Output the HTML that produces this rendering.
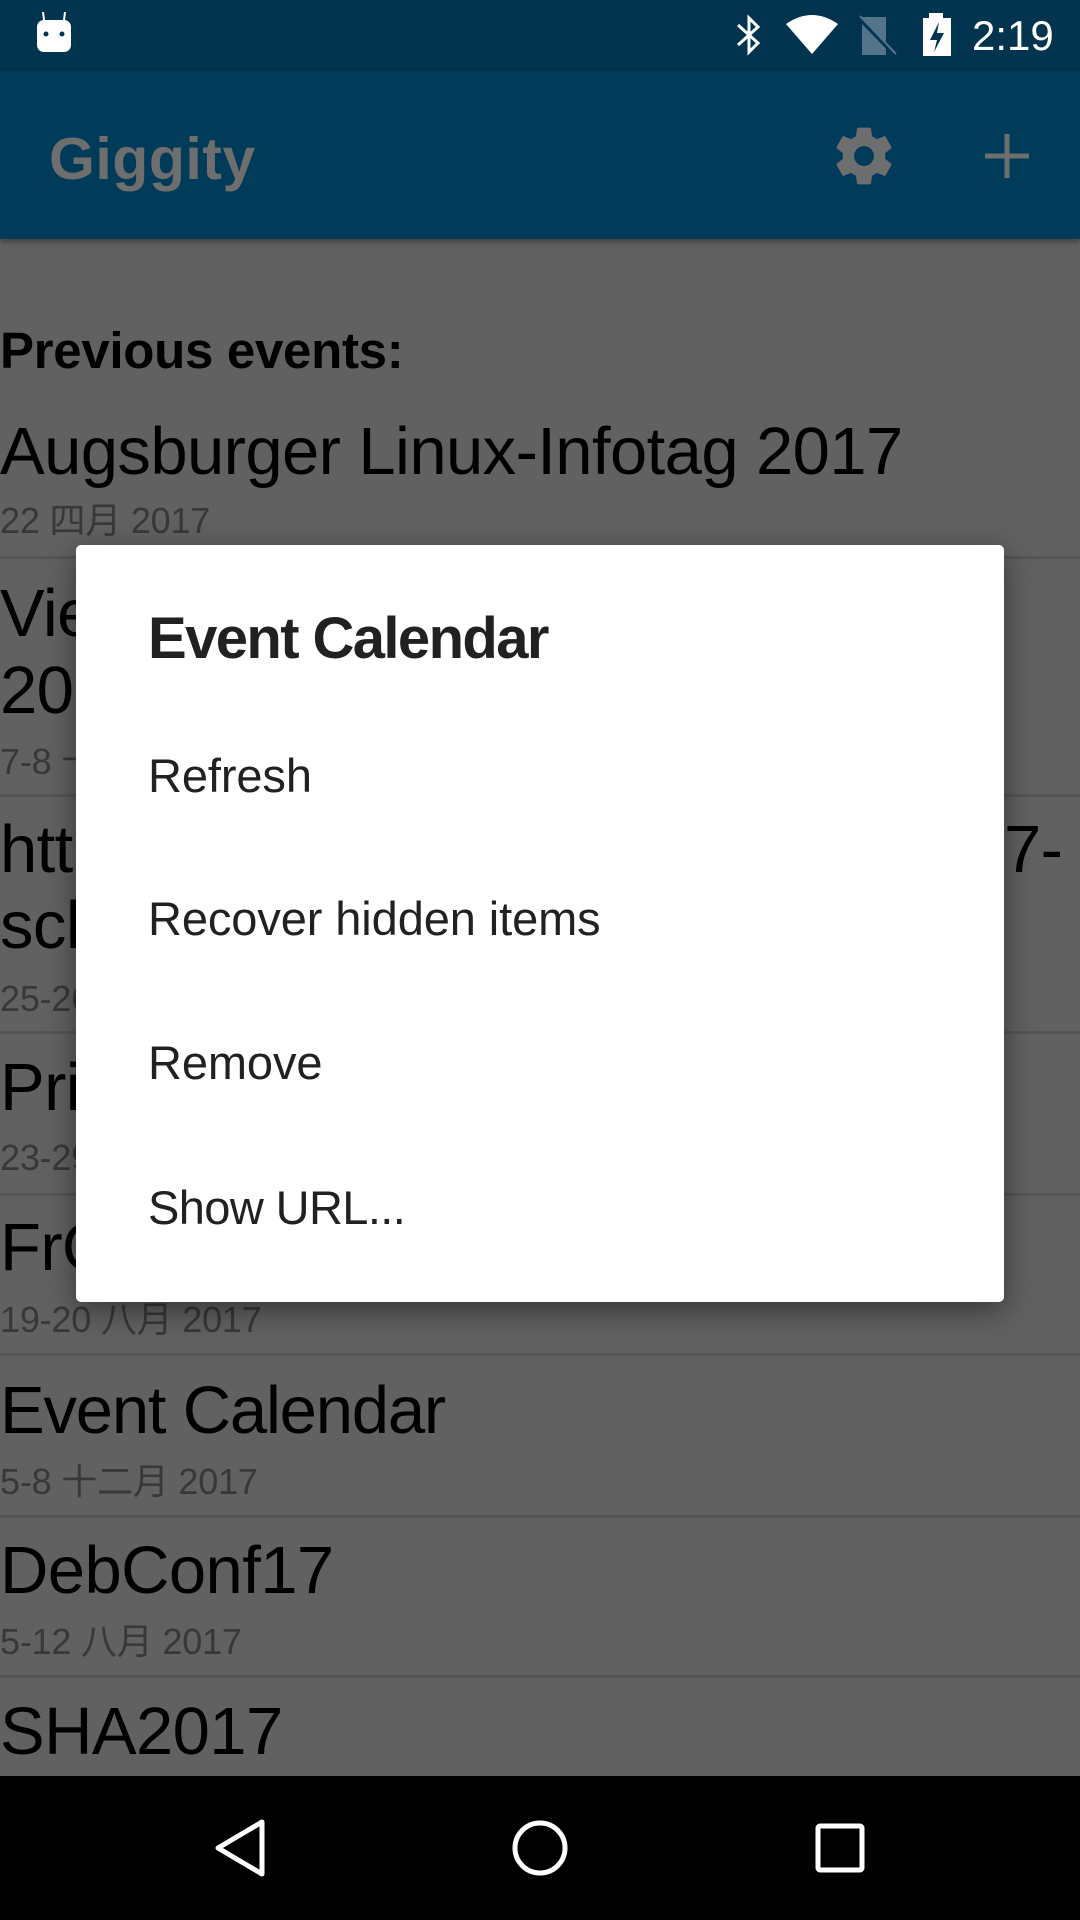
<!DOCTYPE html>
<html><head><meta charset="utf-8"><style>
*{margin:0;padding:0;box-sizing:border-box}
body{width:1080px;height:1920px;position:relative;overflow:hidden;background:#616161;font-family:"Liberation Sans","Noto Sans CJK SC",sans-serif}
.a{position:absolute;white-space:nowrap;line-height:1.15}
.t{font-size:67px;color:#000;letter-spacing:-0.6px;left:0}
.d{font-size:36px;color:#383838;letter-spacing:-0.2px;left:0}
.hr{position:absolute;left:0;width:1080px;height:3px;background:#555}
.m{font-size:47px;color:#212121;left:148px;letter-spacing:-0.1px}
</style></head><body>
<div style="position:absolute;left:0;top:0;width:1080px;height:71px;background:#02344f"></div>
<svg style="position:absolute;left:0;top:0" width="1080" height="71">
<rect x="37" y="20" width="34" height="32" rx="7" fill="#fff"/>
<line x1="44" y1="20" x2="43" y2="12" stroke="#fff" stroke-width="2"/>
<line x1="64" y1="20" x2="65" y2="12" stroke="#fff" stroke-width="2"/>
<circle cx="46" cy="34" r="2.5" fill="#02344f"/><circle cx="62" cy="34" r="2.5" fill="#02344f"/>
<path d="M738 25 L758 43 L749 52 L749 18 L758 27 L738 45" fill="none" stroke="#fff" stroke-width="3"/>
<path d="M786 24 Q812 6 838 24 L812 54 Z" fill="#fff"/>
<path d="M862 17 H886 V55 H862 Z" fill="#54748a"/>
<line x1="858" y1="17" x2="896" y2="56" stroke="#02344f" stroke-width="4"/>
<line x1="860" y1="16" x2="896" y2="54" stroke="#54748a" stroke-width="2"/>
<rect x="929" y="13" width="14" height="6" fill="#fff"/>
<rect x="923" y="18" width="28" height="38" fill="#fff"/>
<path d="M939 22 L930 40 H937 L934 52 L944 33 H937 Z" fill="#02344f"/>
<text x="972" y="50" font-family="Liberation Sans" font-size="42" fill="#fff">2:19</text>
</svg>
<div style="position:absolute;left:0;top:71px;width:1080px;height:168px;background:#003b59;box-shadow:0 3px 6px rgba(0,0,0,.35)"></div>
<div class="a" style="left:49px;top:126px;font-size:59px;font-weight:bold;color:#6e6e6e;letter-spacing:0.5px">Giggity</div>
<svg style="position:absolute;left:830px;top:122px" width="68" height="68" viewBox="0 0 24 24"><path fill="#6e6e6e" d="M19.43 12.98c.04-.32.07-.64.07-.98s-.03-.66-.07-.98l2.11-1.650c.19-.15.24-.42.12-.64l-2-3.46c-.12-.22-.39-.3-.61-.22l-2.49 1c-.52-.4-1.08-.73-1.690-.98l-.38-2.65C14.46 2.18 14.25 2 14 2h-4c-.25 0-.46.18-.49.42l-.38 2.65c-.61.25-1.17.59-1.69.98l-2.49-1c-.23-.09-.49 0-.61.22l-2 3.46c-.13.22-.07.49.12.64l2.11 1.65c-.04.32-.07.65-.07.98s.03.66.07.98l-2.11 1.65c-.19.15-.24.42-.12.64l2 3.46c.12.22.39.3.61.22l2.49-1c.52.4 1.08.73 1.69.98l.38 2.65c.03.24.24.42.49.42h4c.25 0 .46-.18.49-.42l.38-2.65c.61-.25 1.17-.59 1.69-.98l2.49 1c.23.09.49 0 .61-.22l2-3.46c.12-.22.07-.49-.12-.64l-2.11-1.65zM12 15.5c-1.93 0-3.5-1.57-3.5-3.5s1.57-3.5 3.5-3.5 3.5 1.57 3.5 3.5-1.57 3.5-3.5 3.5z"/></svg>
<svg style="position:absolute;left:985px;top:134px" width="44" height="44"><path d="M22 0V44M0 22H44" stroke="#6e6e6e" stroke-width="5"/></svg>

<div class="a" style="left:0;top:322px;font-size:51px;font-weight:bold;color:#000;letter-spacing:-0.3px">Previous events:</div>
<div class="a t" style="top:413px">Augsburger Linux-Infotag 2017</div>
<div class="a d" style="top:500px">22 四月 2017</div>
<div class="hr" style="top:556px"></div>
<div class="a t" style="top:575px">Vienna Linux Days</div>
<div class="a t" style="top:652px">2017</div>
<div class="a d" style="top:741px">7-8 十月 2017</div>
<div class="hr" style="top:794px"></div>
<div class="a t" style="top:811px">https://events.example.org/2017-</div>
<div class="a t" style="left:1004px;top:811px">7-</div>
<div class="a t" style="top:887px">schedule</div>
<div class="a d" style="top:978px">25-26 十一月 2017</div>
<div class="hr" style="top:1031px"></div>
<div class="a t" style="top:1049px">PrivacyWeek 2017</div>
<div class="a d" style="top:1137px">23-29 十月 2017</div>
<div class="hr" style="top:1193px"></div>
<div class="a t" style="top:1209px">FrOSCon 2017</div>
<div class="a d" style="top:1299px">19-20 八月 2017</div>
<div class="hr" style="top:1353px"></div>
<div class="a t" style="top:1372px;letter-spacing:-1.2px">Event Calendar</div>
<div class="a d" style="top:1461px">5-8 十二月 2017</div>
<div class="hr" style="top:1515px"></div>
<div class="a t" style="top:1532px">DebConf17</div>
<div class="a d" style="top:1621px">5-12 八月 2017</div>
<div class="hr" style="top:1675px"></div>
<div class="a t" style="top:1693px">SHA2017</div>

<div style="position:absolute;left:76px;top:545px;width:928px;height:757px;background:#fff;border-radius:5px;box-shadow:0 8px 30px rgba(0,0,0,.45)"></div>
<div class="a" style="left:148px;top:606px;font-size:58px;font-weight:bold;color:#212121;letter-spacing:-1.6px">Event Calendar</div>
<div class="a m" style="top:749px">Refresh</div>
<div class="a m" style="top:892px">Recover hidden items</div>
<div class="a m" style="top:1036px">Remove</div>
<div class="a m" style="top:1181px;letter-spacing:-0.6px">Show URL...</div>

<div style="position:absolute;left:0;top:1776px;width:1080px;height:144px;background:#000"></div>
<svg style="position:absolute;left:0;top:1776px" width="1080" height="144">
<path d="M262 46 L218 72 L262 98 Z" fill="none" stroke="#fff" stroke-width="5" stroke-linejoin="round"/>
<circle cx="540" cy="72" r="25" fill="none" stroke="#fff" stroke-width="5"/>
<rect x="818" y="50" width="44" height="44" rx="2" fill="none" stroke="#fff" stroke-width="5"/>
</svg>
</body></html>
